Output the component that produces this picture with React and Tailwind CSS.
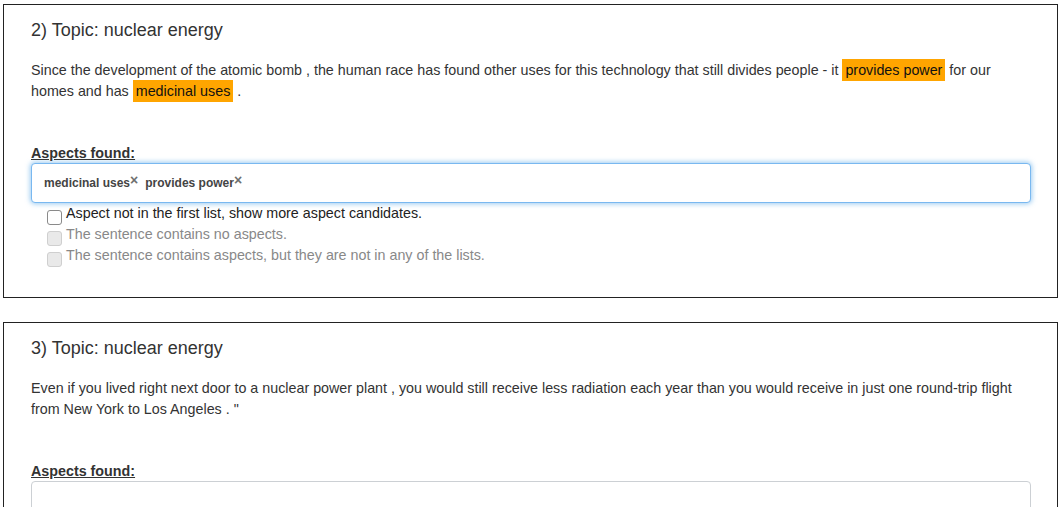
import React from "react";

function Hl({ children }) {
  return (
    <span className="bg-[#ffa500] text-[#111] px-[3px] py-[3px]">{children}</span>
  );
}

function Check({ disabled, children }) {
  return (
    <div className="flex items-start h-[21px] pl-[16px]">
      <span
        className={
          "mt-[7px] w-[15px] h-[15px] shrink-0 rounded-[3px] border " +
          (disabled ? "bg-[#e9e9e9] border-[#cfcfcf]" : "bg-white border-[#8a8a8a]")
        }
      />
      <span className={"ml-[4px] " + (disabled ? "text-[#888]" : "text-[#222]")}>{children}</span>
    </div>
  );
}

function Tag({ children }) {
  return (
    <span className="flex items-baseline text-[12px] font-bold text-[#444]">
      {children}
      <span className="relative -top-[2px] text-[14px] font-bold text-[#6f6f6f] leading-none">×</span>
    </span>
  );
}

function Box({ n, text, tags, focused }) {
  return (
    <div className="w-[1055px] border border-[#222] pl-[27px] pr-[26px] pt-[15px] pb-[31px]">
      <h4 className="text-[18px] leading-[20px] text-[#333]">{n}) Topic: nuclear energy</h4>
      <p className="mt-[20px] text-[14.3px] leading-[21px] text-[#333]">{text}</p>
      <div className="mt-[41px] text-[14.3px] leading-[20px] font-bold underline text-[#333]">Aspects found:</div>
      <div
        className={
          "h-[40px] rounded-[4px] border bg-white flex items-center pl-[12px] gap-[7px] " +
          (focused
            ? "border-[#79b8f0] shadow-[0_0_5px_1px_rgba(102,175,233,0.65)]"
            : "border-[#ccd0d4]")
        }
      >
        {tags.map((t) => (
          <Tag key={t}>{t}</Tag>
        ))}
      </div>
      <div className="text-[14.3px] leading-[21px]">
        <Check>Aspect not in the first list, show more aspect candidates.</Check>
        <Check disabled>The sentence contains no aspects.</Check>
        <Check disabled>The sentence contains aspects, but they are not in any of the lists.</Check>
      </div>
    </div>
  );
}

export default function App() {
  return (
    <div className="pt-[4px] pl-[3px] font-['Liberation_Sans',Arial,sans-serif] text-[#333] bg-white min-h-[507px]">
      <Box
        n={2}
        focused
        tags={["medicinal uses", "provides power"]}
        text={
          <>
            Since the development of the atomic bomb , the human race has found other uses for this
            technology that still divides people - it <Hl>provides power</Hl> for our homes and has{" "}
            <Hl>medicinal uses</Hl> .
          </>
        }
      />
      <div className="h-[24px]" />
      <Box
        n={3}
        tags={[]}
        text={
          <>
            Even if you lived right next door to a nuclear power plant , you would still receive less
            radiation each year than you would receive in just one round-trip flight from New York to
            Los Angeles . "
          </>
        }
      />
    </div>
  );
}
